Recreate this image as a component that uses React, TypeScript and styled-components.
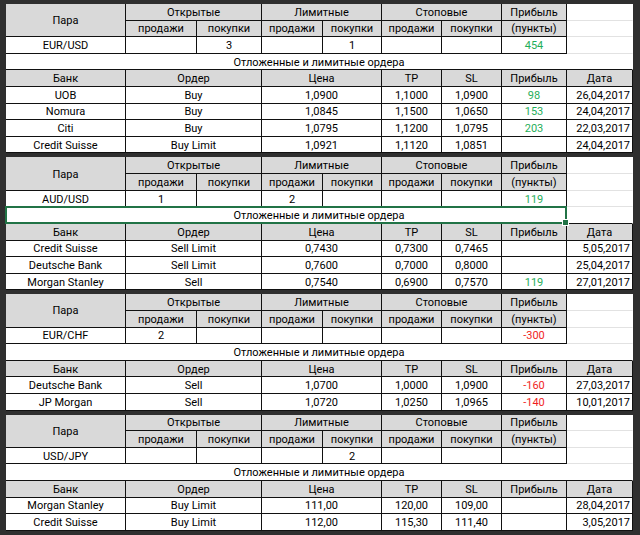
import React from 'react';
import styled, { createGlobalStyle } from 'styled-components';

const Global = createGlobalStyle`
  html, body { margin: 0; padding: 0; background: #fff; }
  body { font-family: Roboto, "Liberation Sans", sans-serif; }
`;

type Tone = 'green' | 'red' | undefined;
type Val = { v: string; tone?: Tone };
type Order = [string, string, string, string, string, Val, string];
type BlockData = {
  pair: string;
  open: [string, string];
  limit: [string, string];
  stop: [string, string];
  profit: Val;
  selected?: boolean;
  orders: Order[];
};

const g = (v: string): Val => ({ v, tone: 'green' });
const r = (v: string): Val => ({ v, tone: 'red' });
const n = (v = ''): Val => ({ v });

const data: BlockData[] = [
  {
    pair: 'EUR/USD', open: ['', '3'], limit: ['', '1'], stop: ['', ''], profit: g('454'),
    orders: [
      ['UOB', 'Buy', '1,0900', '1,1000', '1,0900', g('98'), '26,04,2017'],
      ['Nomura', 'Buy', '1,0845', '1,1500', '1,0650', g('153'), '24,04,2017'],
      ['Citi', 'Buy', '1,0795', '1,1200', '1,0795', g('203'), '22,03,2017'],
      ['Credit Suisse', 'Buy Limit', '1,0921', '1,1120', '1,0851', n(), '24,04,2017'],
    ],
  },
  {
    pair: 'AUD/USD', open: ['1', ''], limit: ['2', ''], stop: ['', ''], profit: g('119'), selected: true,
    orders: [
      ['Credit Suisse', 'Sell Limit', '0,7430', '0,7300', '0,7465', n(), '5,05,2017'],
      ['Deutsche Bank', 'Sell Limit', '0,7600', '0,7000', '0,8000', n(), '25,04,2017'],
      ['Morgan Stanley', 'Sell', '0,7540', '0,6900', '0,7570', g('119'), '27,01,2017'],
    ],
  },
  {
    pair: 'EUR/CHF', open: ['2', ''], limit: ['', ''], stop: ['', ''], profit: r('-300'),
    orders: [
      ['Deutsche Bank', 'Sell', '1,0700', '1,0000', '1,0900', r('-160'), '27,03,2017'],
      ['JP Morgan', 'Sell', '1,0720', '1,0250', '1,0965', r('-140'), '10,01,2017'],
    ],
  },
  {
    pair: 'USD/JPY', open: ['', ''], limit: ['', '2'], stop: ['', ''], profit: n(),
    orders: [
      ['Morgan Stanley', 'Buy Limit', '111,00', '120,00', '109,00', n(), '28,04,2017'],
      ['Credit Suisse', 'Buy Limit', '112,00', '115,30', '111,40', n(), '3,05,2017'],
    ],
  },
];

const Sheet = styled.div`
  width: 640px;
  height: 535px;
  box-sizing: border-box;
  background: #2f2f2f;
  padding: 4px 7px 0 6px;
  display: flex;
  flex-direction: column;
  gap: 4px;
  overflow: hidden;
`;

const Block = styled.div<{ $rows: number }>`
  display: grid;
  grid-template-columns: 120px 71px 65px 61px 59px 60px 60px 65px 66px;
  grid-template-rows: repeat(${(p) => p.$rows}, 16.62px);
  background: #fff;
  flex: none;
`;

const Cell = styled.div<{
  $head?: boolean;
  $align?: 'center' | 'right';
  $tone?: Tone;
  $col?: string;
  $row?: string;
  $plain?: boolean;
}>`
  grid-column: ${(p) => p.$col ?? 'auto'};
  grid-row: ${(p) => p.$row ?? 'auto'};
  box-sizing: border-box;
  border-right: 1px solid ${(p) => (p.$plain ? 'transparent' : '#111')};
  border-bottom: 1px solid ${(p) => (p.$plain ? '#e2e2e2' : '#111')};
  background: ${(p) => (p.$head ? '#d9d9d9' : '#fff')};
  display: flex;
  align-items: center;
  justify-content: ${(p) => (p.$align === 'right' ? 'flex-end' : 'center')};
  padding: 1px ${(p) => (p.$align === 'right' ? '2px' : '0')} 0 0;
  font-size: 11px;
  line-height: 1;
  color: ${(p) => (p.$tone === 'green' ? '#1fae5a' : p.$tone === 'red' ? '#f01e1e' : '#000')};
  white-space: nowrap;
  overflow: hidden;
`;

const Banner = styled(Cell)`
  border-right-color: transparent;
`;

const Selection = styled.div`
  grid-column: 1 / 9;
  grid-row: 4;
  box-sizing: border-box;
  border: 2px solid #217346;
  margin: -1px 0 0 -1px;
  position: relative;
  pointer-events: none;
  z-index: 2;
`;

const Handle = styled.span`
  position: absolute;
  right: -4px;
  bottom: -4px;
  width: 5px;
  height: 5px;
  background: #217346;
  border: 1px solid #fff;
`;

function PairBlock({ b }: { b: BlockData }) {
  const rows = 5 + b.orders.length;
  return (
    <Block $rows={rows}>
      <Cell $head $col="1" $row="1 / 3">Пара</Cell>
      <Cell $head $col="2 / 4" $row="1">Открытые</Cell>
      <Cell $head $col="4 / 6" $row="1">Лимитные</Cell>
      <Cell $head $col="6 / 8" $row="1">Стоповые</Cell>
      <Cell $head $col="8" $row="1">Прибыль</Cell>
      <Cell $plain $col="9" $row="1" />
      {['продажи', 'покупки', 'продажи', 'покупки', 'продажи', 'покупки'].map((t, i) => (
        <Cell key={i} $head $col={String(i + 2)} $row="2">{t}</Cell>
      ))}
      <Cell $head $col="8" $row="2">(пункты)</Cell>
      <Cell $plain $col="9" $row="2" />
      <Cell $col="1" $row="3">{b.pair}</Cell>
      {[...b.open, ...b.limit, ...b.stop].map((t, i) => (
        <Cell key={i} $col={String(i + 2)} $row="3">{t}</Cell>
      ))}
      <Cell $col="8" $row="3" $tone={b.profit.tone}>{b.profit.v}</Cell>
      <Cell $plain $col="9" $row="3" />
      <Banner $col="1 / 10" $row="4">Отложенные и лимитные ордера</Banner>
      {b.selected && (
        <Selection>
          <Handle />
        </Selection>
      )}
      <Cell $head $col="1" $row="5">Банк</Cell>
      <Cell $head $col="2 / 4" $row="5">Ордер</Cell>
      <Cell $head $col="4 / 6" $row="5">Цена</Cell>
      <Cell $head $col="6" $row="5">TP</Cell>
      <Cell $head $col="7" $row="5">SL</Cell>
      <Cell $head $col="8" $row="5">Прибыль</Cell>
      <Cell $head $col="9" $row="5">Дата</Cell>
      {b.orders.map((o, i) => {
        const row = String(6 + i);
        return (
          <React.Fragment key={i}>
            <Cell $col="1" $row={row}>{o[0]}</Cell>
            <Cell $col="2 / 4" $row={row}>{o[1]}</Cell>
            <Cell $col="4 / 6" $row={row}>{o[2]}</Cell>
            <Cell $col="6" $row={row}>{o[3]}</Cell>
            <Cell $col="7" $row={row}>{o[4]}</Cell>
            <Cell $col="8" $row={row} $tone={o[5].tone}>{o[5].v}</Cell>
            <Cell $col="9" $row={row} $align="right">{o[6]}</Cell>
          </React.Fragment>
        );
      })}
    </Block>
  );
}

export default function App() {
  return (
    <>
      <Global />
      <Sheet>
        {data.map((b) => (
          <PairBlock key={b.pair} b={b} />
        ))}
      </Sheet>
    </>
  );
}
